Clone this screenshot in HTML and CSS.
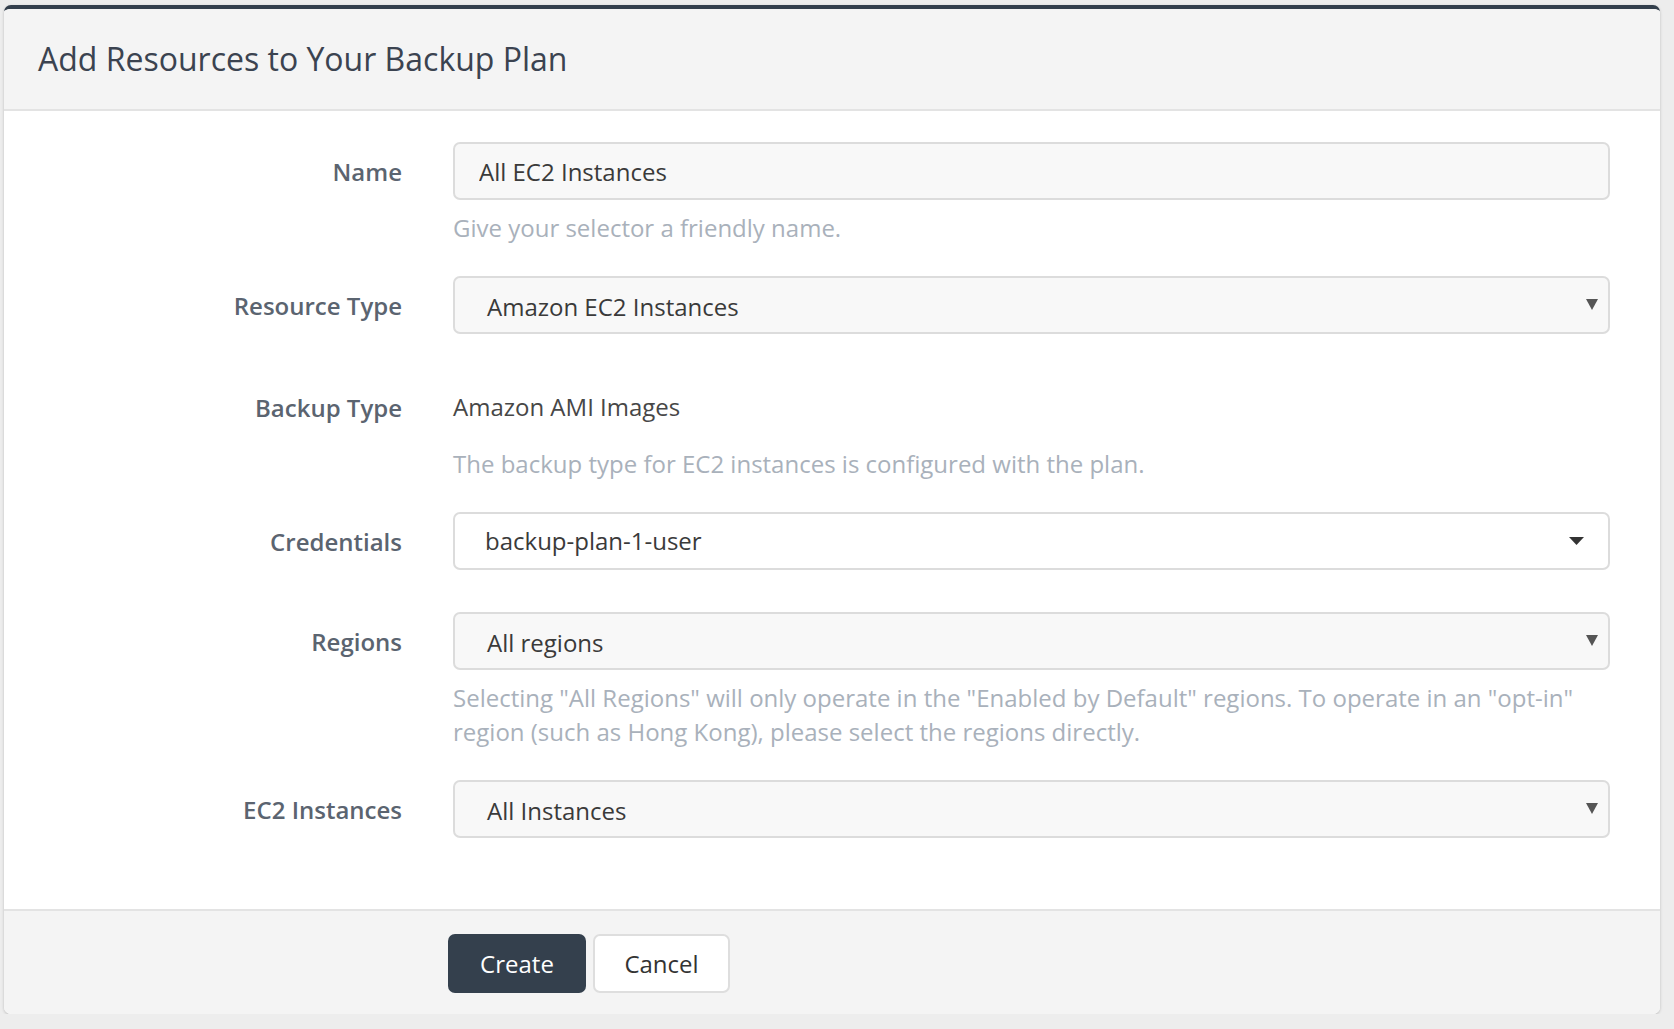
FILE: index.html
```html
<!DOCTYPE html>
<html lang="en">
<head>
<meta charset="utf-8">
<title>Add Resources to Your Backup Plan</title>
<link rel="stylesheet" href="styles.css">
</head>
<body>
<div class="page">
  <div class="modal">
    <div class="modal-header">
      <h1 class="title">Add Resources to Your Backup Plan</h1>
    </div>
    <form class="modal-body">
      <div class="row has-help">
        <label class="label">Name</label>
        <div class="field">
          <input class="control input" type="text" value="All EC2 Instances">
          <p class="help">Give your selector a friendly name.</p>
        </div>
      </div>
      <div class="row before-static">
        <label class="label">Resource Type</label>
        <div class="field">
          <div class="control select">
            <span class="value">Amazon EC2 Instances</span>
            <svg class="caret" width="12" height="11" viewBox="0 0 12 11"><path d="M0 0H12L6 11Z" fill="#555"/></svg>
          </div>
        </div>
      </div>
      <div class="row has-help">
        <label class="label">Backup Type</label>
        <div class="field">
          <div class="static">Amazon AMI Images</div>
          <p class="help">The backup type for EC2 instances is configured with the plan.</p>
        </div>
      </div>
      <div class="row">
        <label class="label">Credentials</label>
        <div class="field">
          <div class="control select select-white">
            <span class="value">backup-plan-1-user</span>
            <svg class="caret" width="15" height="8" viewBox="0 0 15 8"><path d="M0 0H15L7.5 8Z" fill="#333"/></svg>
          </div>
        </div>
      </div>
      <div class="row has-help">
        <label class="label">Regions</label>
        <div class="field">
          <div class="control select">
            <span class="value">All regions</span>
            <svg class="caret" width="12" height="11" viewBox="0 0 12 11"><path d="M0 0H12L6 11Z" fill="#555"/></svg>
          </div>
          <p class="help">Selecting "All Regions" will only operate in the "Enabled by Default" regions. To operate in an "opt-in" region (such as Hong Kong), please select the regions directly.</p>
        </div>
      </div>
      <div class="row">
        <label class="label">EC2 Instances</label>
        <div class="field">
          <div class="control select">
            <span class="value">All Instances</span>
            <svg class="caret" width="12" height="11" viewBox="0 0 12 11"><path d="M0 0H12L6 11Z" fill="#555"/></svg>
          </div>
        </div>
      </div>
    </form>
    <div class="modal-footer">
      <button class="btn btn-primary" type="button">Create</button>
      <button class="btn btn-default" type="button">Cancel</button>
    </div>
  </div>
</div>
</body>
</html>
```
FILE: styles.css
```css
html, body {
  margin: 0;
  padding: 0;
}

body {
  background: #ededed;
  font-family: "Open Sans", "Noto Sans", sans-serif;
  font-size: 24px;
  line-height: 34px;
  color: #3a3a3a;
}

.page {
  padding: 5px 14px 0 4px;
}

.modal {
  background: #ffffff;
  border-top: 4px solid #333f4c;
  border-radius: 7px;
  box-shadow: 0 1px 3px rgba(0, 0, 0, 0.22);
  overflow: hidden;
}

.modal-header {
  height: 100px;
  background: #f4f4f4;
  border-bottom: 2px solid #e3e3e3;
  display: flex;
  align-items: center;
  padding: 0 34px;
}

.title {
  margin: 0;
  font-size: 32px;
  font-weight: 400;
  line-height: 40px;
  color: #3b4350;
}

.modal-body {
  margin: 0;
  padding: 31px 50px 71px 0;
}

.row {
  display: grid;
  grid-template-columns: 398px 1fr;
  column-gap: 51px;
  margin-bottom: 42px;
}

.row.has-help {
  margin-bottom: 31px;
}

.row.before-static {
  margin-bottom: 44px;
}

.row:last-child {
  margin-bottom: 0;
}

.label {
  text-align: right;
  font-weight: 600;
  padding-top: 13px;
  color: #5b6470;
}

.control {
  display: block;
  width: 100%;
  height: 58px;
  box-sizing: border-box;
  border: 2px solid #dcdcdc;
  border-radius: 7px;
  background: #f8f8f8;
  font-family: "Open Sans", "Noto Sans", sans-serif;
  font-size: 24px;
  line-height: 34px;
  color: #3a3a3a;
  margin: 0;
}

.input {
  padding: 1px 24px 0 24px;
  outline: none;
}

.select {
  display: flex;
  align-items: center;
  padding: 3px 10px 0 32px;
}

.select .value {
  flex: 1;
}

.select .caret {
  flex: none;
  margin-top: -4px;
}

.select-white {
  background: #ffffff;
  padding: 0 24px 0 30px;
}

.select-white .caret {
  margin-top: 0;
}

.static {
  height: 58px;
  display: flex;
  align-items: center;
  color: #474747;
}

.help {
  margin: 11px 0 0;
  color: #a9b1bb;
}

.modal-footer {
  border-top: 2px solid #e3e3e3;
  background: #f4f4f4;
  padding: 23px 0 21px 444px;
  display: flex;
  gap: 7px;
}

.btn {
  height: 59px;
  box-sizing: border-box;
  border-radius: 7px;
  font-family: "Open Sans", "Noto Sans", sans-serif;
  font-size: 24px;
  line-height: 34px;
  padding: 0;
  cursor: pointer;
}

.btn-primary {
  width: 138px;
  background: #34404d;
  color: #ffffff;
  border: none;
}

.btn-default {
  width: 137px;
  background: #ffffff;
  color: #333333;
  border: 2px solid #dedede;
}
```
